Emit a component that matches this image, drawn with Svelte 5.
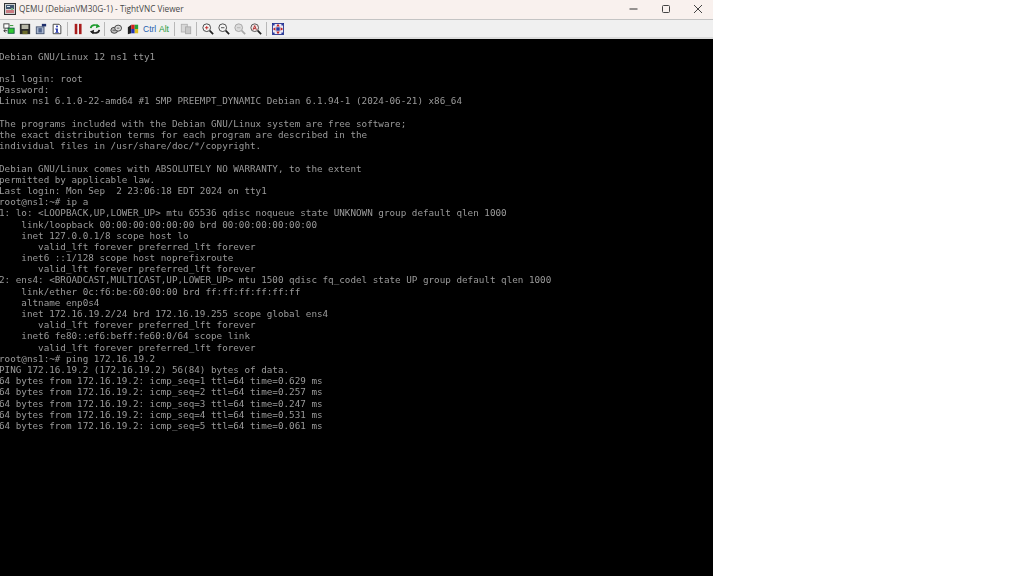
<script>
  const lines = [
    '',
    'Debian GNU/Linux 12 ns1 tty1',
    '',
    'ns1 login: root',
    'Password:',
    'Linux ns1 6.1.0-22-amd64 #1 SMP PREEMPT_DYNAMIC Debian 6.1.94-1 (2024-06-21) x86_64',
    '',
    'The programs included with the Debian GNU/Linux system are free software;',
    'the exact distribution terms for each program are described in the',
    'individual files in /usr/share/doc/*/copyright.',
    '',
    'Debian GNU/Linux comes with ABSOLUTELY NO WARRANTY, to the extent',
    'permitted by applicable law.',
    'Last login: Mon Sep  2 23:06:18 EDT 2024 on tty1',
    'root@ns1:~# ip a',
    '1: lo: <LOOPBACK,UP,LOWER_UP> mtu 65536 qdisc noqueue state UNKNOWN group default qlen 1000',
    '    link/loopback 00:00:00:00:00:00 brd 00:00:00:00:00:00',
    '    inet 127.0.0.1/8 scope host lo',
    '       valid_lft forever preferred_lft forever',
    '    inet6 ::1/128 scope host noprefixroute',
    '       valid_lft forever preferred_lft forever',
    '2: ens4: <BROADCAST,MULTICAST,UP,LOWER_UP> mtu 1500 qdisc fq_codel state UP group default qlen 1000',
    '    link/ether 0c:f6:be:60:00:00 brd ff:ff:ff:ff:ff:ff',
    '    altname enp0s4',
    '    inet 172.16.19.2/24 brd 172.16.19.255 scope global ens4',
    '       valid_lft forever preferred_lft forever',
    '    inet6 fe80::ef6:beff:fe60:0/64 scope link',
    '       valid_lft forever preferred_lft forever',
    'root@ns1:~# ping 172.16.19.2',
    'PING 172.16.19.2 (172.16.19.2) 56(84) bytes of data.',
    '64 bytes from 172.16.19.2: icmp_seq=1 ttl=64 time=0.629 ms',
    '64 bytes from 172.16.19.2: icmp_seq=2 ttl=64 time=0.257 ms',
    '64 bytes from 172.16.19.2: icmp_seq=3 ttl=64 time=0.247 ms',
    '64 bytes from 172.16.19.2: icmp_seq=4 ttl=64 time=0.531 ms',
    '64 bytes from 172.16.19.2: icmp_seq=5 ttl=64 time=0.061 ms'
  ];
</script>

<div class="window">
  <header class="titlebar">
    <svg class="appicon" viewBox="0 0 12 12" width="12" height="12">
      <rect x="0.500" y="0.500" width="11" height="11" fill="#cfcfcf" stroke="#333" />
      <rect x="2" y="2" width="8" height="4" fill="#41566e" />
      <rect x="3" y="3" width="3" height="1" fill="#dfe6ee" />
      <rect x="2" y="7" width="8" height="3" fill="#c97a80" />
      <rect x="7" y="5" width="2" height="2" fill="#7fb58a" />
    </svg>
    <span class="title">QEMU (DebianVM30G-1) - TightVNC Viewer</span>
    <div class="controls">
      <svg viewBox="0 0 10 10" width="10" height="10"><path d="M0.500 5h8" stroke="#333" stroke-width="1" /></svg>
      <svg viewBox="0 0 10 10" width="10" height="10"><rect x="1.500" y="1.500" width="7" height="7" rx="1" fill="none" stroke="#444" /></svg>
      <svg viewBox="0 0 10 10" width="10" height="10"><path d="M1 1l8 8M9 1l-8 8" stroke="#444" /></svg>
    </div>
  </header>

  <nav class="toolbar">
    <svg class="ic" viewBox="0 0 14 14">
      <rect x="1" y="1" width="6" height="5" fill="#fff" stroke="#333" />
      <rect x="6" y="6" width="7" height="6" fill="#32c832" stroke="#154" />
      <path d="M1 9h4M3 7l-2 2 2 2" stroke="#222" fill="none" />
      <path d="M8 3h4" stroke="#1a8a1a" />
    </svg>
    <svg class="ic" viewBox="0 0 14 14">
      <rect x="1" y="1" width="12" height="12" fill="#2b2b2b" />
      <rect x="3" y="2" width="8" height="5" fill="#b8b8a8" />
      <rect x="4" y="9" width="6" height="4" fill="#6b6b2a" />
    </svg>
    <svg class="ic" viewBox="0 0 14 14">
      <rect x="1.500" y="4.500" width="9" height="8" fill="#a9b6cf" stroke="#40506e" />
      <rect x="4" y="6" width="4" height="5" fill="#51658c" />
      <rect x="8" y="1" width="5" height="3" fill="#1d2f6b" />
    </svg>
    <svg class="ic" viewBox="0 0 14 14">
      <path d="M2.500 1.500h7l2 2v9h-9z" fill="#fff" stroke="#333" />
      <rect x="6" y="3" width="2" height="2" fill="#1b2ea8" />
      <path d="M5 6.500h3v4h1v1H5v-1h1v-3H5z" fill="#1b2ea8" />
    </svg>
    <i class="sep"></i>
    <svg class="ic" viewBox="0 0 14 14">
      <rect x="2" y="1" width="3" height="12" fill="#a81c1c" />
      <rect x="7" y="1" width="3" height="12" fill="#a81c1c" />
    </svg>
    <svg class="ic tight" viewBox="0 0 14 14">
      <path d="M2 6a5 4 0 0 1 9-2" fill="none" stroke="#1c9a2c" stroke-width="2" />
      <path d="M9 1l4 3-5 2z" fill="#1c9a2c" />
      <path d="M12 8a5 4 0 0 1-9 2" fill="none" stroke="#222" stroke-width="2" />
      <path d="M5 13l-4-3 5-2z" fill="#222" />
    </svg>
    <i class="sep"></i>
    <svg class="ic" viewBox="0 0 14 14">
      <ellipse cx="5" cy="8.500" rx="4" ry="3.500" fill="#bbb" stroke="#333" />
      <ellipse cx="9.500" cy="6" rx="4" ry="3.500" fill="#ddd" stroke="#333" />
      <path d="M3 8.500h3M8 6h3" stroke="#555" />
    </svg>
    <svg class="ic flag" viewBox="0 0 14 14">
      <path d="M1 5l4-3v10l-4 1z" fill="#222" />
      <rect x="5" y="2" width="4" height="5" fill="#d62020" />
      <rect x="9" y="2" width="4" height="5" fill="#27a33a" />
      <rect x="5" y="7" width="4" height="5" fill="#2035b8" />
      <rect x="9" y="7" width="4" height="5" fill="#e0c020" />
    </svg>
    <span class="key ctrl">Ctrl</span>
    <span class="key alt">Alt</span>
    <i class="sep"></i>
    <svg class="ic dim" viewBox="0 0 14 14">
      <rect x="1.500" y="1.500" width="7" height="9" fill="#d8d8d8" stroke="#b0b0b0" />
      <rect x="6.500" y="4.500" width="6" height="8" fill="#c8c8c8" stroke="#a8a8a8" />
    </svg>
    <i class="sep"></i>
    <svg class="ic" viewBox="0 0 14 14">
      <circle cx="5.500" cy="5.500" r="4.500" fill="#f4f4f4" stroke="#333" />
      <path d="M3.500 5.500h4M5.500 3.500v4" stroke="#c02020" />
      <path d="M9 9l4 4" stroke="#222" stroke-width="2" />
    </svg>
    <svg class="ic" viewBox="0 0 14 14">
      <circle cx="5.500" cy="5.500" r="4.500" fill="#f4f4f4" stroke="#333" />
      <path d="M3.500 5.500h4" stroke="#333" />
      <path d="M9 9l4 4" stroke="#222" stroke-width="2" />
    </svg>
    <svg class="ic" viewBox="0 0 14 14">
      <circle cx="5.500" cy="5.500" r="4.500" fill="#dcdcdc" stroke="#a0a0a0" />
      <path d="M3.500 5.500h4" stroke="#b0b0b0" />
      <path d="M9 9l4 4" stroke="#a8a8a8" stroke-width="2" />
    </svg>
    <svg class="ic" viewBox="0 0 14 14">
      <circle cx="5.500" cy="5.500" r="4.500" fill="#f0e4e4" stroke="#444" />
      <path d="M3.500 8l2-5 2 5M4.500 6.500h2" stroke="#b02020" fill="none" />
      <path d="M9 9l4 4" stroke="#222" stroke-width="2" />
    </svg>
    <i class="sep"></i>
    <svg class="ic" viewBox="0 0 14 14">
      <rect x="0.500" y="0.500" width="13" height="13" fill="#e8e8f4" stroke="#1c2a8a" />
      <path d="M1 7l3-2v4zM13 7l-3-2v4zM7 1l-2 3h4zM7 13l-2-3h4z" fill="#c02020" />
      <rect x="5" y="5" width="4" height="4" fill="#2838a0" />
      <path d="M1 1h2v2H1zM11 1h2v2h-2zM1 11h2v2H1zM11 11h2v2h-2z" fill="#2838a0" />
    </svg>
  </nav>

  <main class="screen">
    {#each lines as line}
      <div class="row">{line}</div>
    {/each}
  </main>
</div>

<style>
  :global(body) {
    margin: 0;
    background: #fff;
  }
  .window {
    width: 713px;
    height: 576px;
    display: flex;
    flex-direction: column;
    overflow: hidden;
  }
  .titlebar {
    height: 17px;
    flex: none;
    display: flex;
    align-items: center;
    background: #f9f1ee;
    border-bottom: 1px solid #c4c4c4;
    padding: 0 0 2px 4px;
    font: 8.25px "Open Sans", "Noto Sans", sans-serif;
    color: #484848;
  }
  .appicon {
    flex: none;
  }
  .title {
    margin-left: 3px;
  }
  .controls {
    margin-left: auto;
    display: flex;
    gap: 22px;
    padding-right: 10px;
  }
  .toolbar {
    height: 17px;
    flex: none;
    display: flex;
    align-items: center;
    background: #f0f0f0;
    padding-left: 3px;
    border-bottom: 2px solid #dcdcdc;
  }
  .ic {
    width: 12px;
    height: 12px;
    margin-right: 4px;
    flex: none;
  }
  .tight {
    margin-right: 3px;
  }
  .flag {
    margin-left: 1px;
    margin-right: 4px;
  }
  .sep {
    width: 1px;
    height: 14px;
    background: #b8b8b8;
    margin-right: 5px;
    flex: none;
  }
  .key {
    font: 8.5px "Liberation Sans", sans-serif;
    margin-right: 4px;
  }
  .ctrl {
    color: #1f5faf;
    width: 12px;
  }
  .alt {
    color: #1f9a3a;
    width: 11px;
  }
  .screen {
    flex: 1;
    background: #000;
    color: #9a9a9a;
    font: 9.27px/11.2px "DejaVu Sans Mono", "Liberation Mono", monospace;
    white-space: pre;
    padding-top: 0.5px;
    overflow: hidden;
    filter: blur(0.25px);
  }
  .row {
    height: 11.2px;
    margin-left: -1px;
  }
</style>
